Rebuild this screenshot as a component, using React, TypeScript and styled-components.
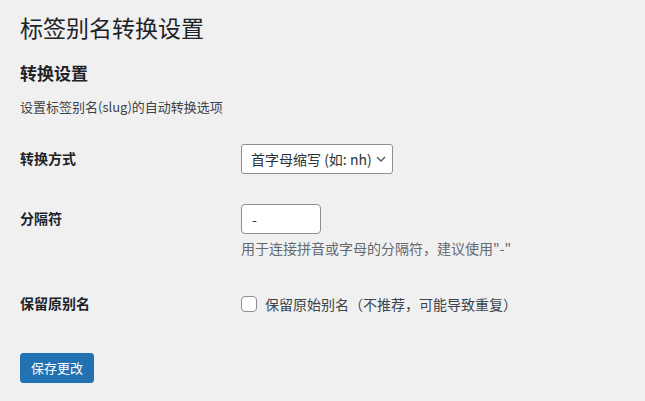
import React from 'react';
import styled, { createGlobalStyle } from 'styled-components';

const Global = createGlobalStyle`
  html, body { margin: 0; padding: 0; background: #f0f0f1; }
  body {
    font-family: "Noto Sans CJK SC", "Noto Sans", sans-serif;
    font-size: 13px;
    line-height: 1.4em;
    color: #3c434a;
  }
  * { box-sizing: border-box; }
`;

const Wrap = styled.div`
  padding: 12px 20px 20px 20px;
`;

const Title = styled.h1`
  margin: 0;
  font-size: 23px;
  font-weight: 400;
  line-height: 30px;
  color: #1d2327;
`;

const SectionTitle = styled.h2`
  margin: 19.5px 0 0;
  font-size: 17px;
  font-weight: 600;
  line-height: 22px;
  color: #1d2327;
`;

const Intro = styled.p`
  margin: 14.5px 0 0;
  font-size: 13px;
  line-height: 18px;
  color: #3c434a;
`;

const FormTable = styled.div`
  margin-top: 13px;
  display: flex;
  flex-direction: column;
`;

const Row = styled.div`
  display: grid;
  grid-template-columns: 221px 1fr;
  align-items: start;
`;

const Label = styled.div`
  padding: 20px 0;
  font-size: 14px;
  font-weight: 600;
  line-height: 18px;
  color: #1d2327;
`;

const Field = styled.div`
  padding: 15px 0;
  font-size: 14px;
  color: #2c3338;
`;

const SelectBox = styled.div`
  position: relative;
  display: inline-block;
  width: 152px;
`;

const Select = styled.select`
  appearance: none;
  -webkit-appearance: none;
  width: 100%;
  height: 30px;
  padding: 0 12px 0 9px;
  border: 1px solid #8c8f94;
  border-radius: 3px;
  background: #fff;
  font-family: inherit;
  font-size: 14px;
  line-height: 28px;
  color: #2c3338;
  outline: none;
`;

const Chevron = styled.svg`
  position: absolute;
  right: 7px;
  top: 12px;
  pointer-events: none;
`;

const TextInput = styled.input`
  display: block;
  width: 80px;
  height: 30px;
  padding: 0 8px 0 10px;
  border: 1px solid #8c8f94;
  border-radius: 4px;
  background: #fff;
  font-family: inherit;
  font-size: 14px;
  color: #2c3338;
  outline: none;
`;

const Help = styled.p`
  margin: 5px 0 0;
  font-size: 14px;
  line-height: 19.5px;
  color: #646970;
`;

const CheckLabel = styled.label`
  display: flex;
  align-items: center;
  gap: 8px;
  margin-top: 5px;
  font-size: 14px;
  line-height: 20px;
  color: #3c434a;
`;

const Checkbox = styled.span`
  display: inline-block;
  width: 16px;
  height: 16px;
  border: 1px solid #8c8f94;
  border-radius: 4px;
  background: #fff;
  flex: none;
`;

const Submit = styled.div`
  margin-top: 21px;
`;

const Button = styled.button`
  height: 30px;
  padding: 0 10px;
  border: 1px solid #2271b1;
  border-radius: 3px;
  background: #2271b1;
  color: #fff;
  font-family: inherit;
  font-size: 13px;
  line-height: 28px;
  cursor: pointer;
`;

export default function App() {
  return (
    <>
      <Global />
      <Wrap>
        <Title>标签别名转换设置</Title>
        <SectionTitle>转换设置</SectionTitle>
        <Intro>设置标签别名(slug)的自动转换选项</Intro>
        <FormTable>
          <Row>
            <Label>转换方式</Label>
            <Field>
              <SelectBox>
                <Select defaultValue="initials">
                  <option value="initials">首字母缩写 (如: nh)</option>
                </Select>
                <Chevron width="10" height="6" viewBox="0 0 10 6">
                  <path d="M1 1l4 4 4-4" fill="none" stroke="#50575e" strokeWidth="1.4" />
                </Chevron>
              </SelectBox>
            </Field>
          </Row>
          <Row>
            <Label>分隔符</Label>
            <Field>
              <TextInput defaultValue="-" />
              <Help>用于连接拼音或字母的分隔符，建议使用"-"</Help>
            </Field>
          </Row>
          <Row>
            <Label>保留原别名</Label>
            <Field>
              <CheckLabel>
                <Checkbox />
                保留原始别名（不推荐，可能导致重复）
              </CheckLabel>
            </Field>
          </Row>
        </FormTable>
        <Submit>
          <Button>保存更改</Button>
        </Submit>
      </Wrap>
    </>
  );
}
